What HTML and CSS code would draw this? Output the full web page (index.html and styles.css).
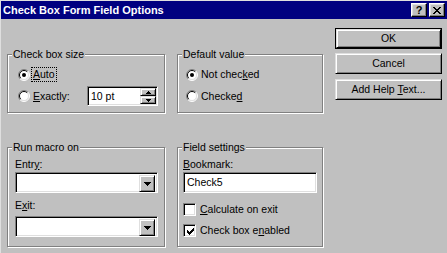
FILE: index.html
```html
<!DOCTYPE html>
<html>
<head>
<meta charset="utf-8">
<link rel="stylesheet" href="styles.css">
</head>
<body>
<div class="window">
  <div class="titlebar">
    <span class="title">Check Box Form Field Options</span>
    <div class="caption-btns">
      <div class="cap-btn help">?</div>
      <div class="cap-btn close">
        <svg width="8" height="7" viewBox="0 0 8 7" shape-rendering="crispEdges"><path d="M0 0h2v1h-2zM6 0h2v1h-2zM1 1h2v1h-2zM5 1h2v1h-2zM2 2h4v1h-4zM3 3h2v1h-2zM2 4h4v1h-4zM1 5h2v1h-2zM5 5h2v1h-2zM0 6h2v1h-2zM6 6h2v1h-2z" fill="#000"/></svg>
      </div>
    </div>
  </div>
  <div class="content">
    <div class="groups">
      <div class="group g-size">
        <span class="group-label">Check box size</span>
        <div class="opt-row">
          <svg class="radio" width="12" height="12" viewBox="0 0 12 12"><circle cx="6" cy="6" r="5" fill="#fff"/><path d="M2.1 9.9A5.5 5.5 0 0 1 9.9 2.1" fill="none" stroke="#808080"/><path d="M9.9 2.1A5.5 5.5 0 0 1 2.1 9.9" fill="none" stroke="#fff"/><path d="M2.8 9.2A4.5 4.5 0 0 1 9.2 2.8" fill="none" stroke="#000"/><path d="M9.2 2.8A4.5 4.5 0 0 1 2.8 9.2" fill="none" stroke="#dfdfdf"/><circle cx="6" cy="6" r="2" fill="#000"/></svg>
          <span class="lbl focus"><u>A</u>uto</span>
        </div>
        <div class="opt-row tall">
          <svg class="radio" width="12" height="12" viewBox="0 0 12 12"><circle cx="6" cy="6" r="5" fill="#fff"/><path d="M2.1 9.9A5.5 5.5 0 0 1 9.9 2.1" fill="none" stroke="#808080"/><path d="M9.9 2.1A5.5 5.5 0 0 1 2.1 9.9" fill="none" stroke="#fff"/><path d="M2.8 9.2A4.5 4.5 0 0 1 9.2 2.8" fill="none" stroke="#000"/><path d="M9.2 2.8A4.5 4.5 0 0 1 2.8 9.2" fill="none" stroke="#dfdfdf"/></svg>
          <span class="lbl exactly"><u>E</u>xactly:</span>
          <div class="sunken spin">
            <span class="field-text">10 pt</span>
            <div class="spin-btns">
              <div class="raised spin-btn"><svg width="5" height="3" viewBox="0 0 5 3" shape-rendering="crispEdges"><path d="M2 0h1v1h1v1h1v1h-5v-1h1v-1h1z" fill="#000"/></svg></div>
              <div class="raised spin-btn"><svg width="5" height="3" viewBox="0 0 5 3" shape-rendering="crispEdges"><path d="M0 0h5v1h-1v1h-1v1h-1v-1h-1v-1h-1z" fill="#000"/></svg></div>
            </div>
          </div>
        </div>
      </div>

      <div class="group g-default">
        <span class="group-label">Default value</span>
        <div class="opt-row">
          <svg class="radio" width="12" height="12" viewBox="0 0 12 12"><circle cx="6" cy="6" r="5" fill="#fff"/><path d="M2.1 9.9A5.5 5.5 0 0 1 9.9 2.1" fill="none" stroke="#808080"/><path d="M9.9 2.1A5.5 5.5 0 0 1 2.1 9.9" fill="none" stroke="#fff"/><path d="M2.8 9.2A4.5 4.5 0 0 1 9.2 2.8" fill="none" stroke="#000"/><path d="M9.2 2.8A4.5 4.5 0 0 1 2.8 9.2" fill="none" stroke="#dfdfdf"/><circle cx="6" cy="6" r="2" fill="#000"/></svg>
          <span class="lbl">Not chec<u>k</u>ed</span>
        </div>
        <div class="opt-row tall">
          <svg class="radio" width="12" height="12" viewBox="0 0 12 12"><circle cx="6" cy="6" r="5" fill="#fff"/><path d="M2.1 9.9A5.5 5.5 0 0 1 9.9 2.1" fill="none" stroke="#808080"/><path d="M9.9 2.1A5.5 5.5 0 0 1 2.1 9.9" fill="none" stroke="#fff"/><path d="M2.8 9.2A4.5 4.5 0 0 1 9.2 2.8" fill="none" stroke="#000"/><path d="M9.2 2.8A4.5 4.5 0 0 1 2.8 9.2" fill="none" stroke="#dfdfdf"/></svg>
          <span class="lbl">Checke<u>d</u></span>
        </div>
      </div>

      <div class="group g-macro">
        <span class="group-label">Run macro on</span>
        <div class="field-label">Entr<u>y</u>:</div>
        <div class="sunken combo">
          <div class="raised drop-btn"><svg width="7" height="4" viewBox="0 0 7 4" shape-rendering="crispEdges"><path d="M0 0h7v1h-1v1h-1v1h-1v1h-1v-1h-1v-1h-1v-1h-1z" fill="#000"/></svg></div>
        </div>
        <div class="field-label second">E<u>x</u>it:</div>
        <div class="sunken combo">
          <div class="raised drop-btn"><svg width="7" height="4" viewBox="0 0 7 4" shape-rendering="crispEdges"><path d="M0 0h7v1h-1v1h-1v1h-1v1h-1v-1h-1v-1h-1v-1h-1z" fill="#000"/></svg></div>
        </div>
      </div>

      <div class="group g-field">
        <span class="group-label">Field settings</span>
        <div class="field-label"><u>B</u>ookmark:</div>
        <div class="sunken textbox"><span class="field-text">Check5</span></div>
        <div class="chk-row first">
          <div class="sunken checkbox"></div>
          <span class="lbl"><u>C</u>alculate on exit</span>
        </div>
        <div class="chk-row">
          <div class="sunken checkbox"><svg width="7" height="7" viewBox="0 0 7 7" shape-rendering="crispEdges"><path d="M6 0h1v3h-1v1h-1v1h-1v1h-1v1h-1v-1h-1v-1h-1v-3h1v1h1v1h1v-1h1v-1h1z" fill="#000"/></svg></div>
          <span class="lbl">Check box e<u>n</u>abled</span>
        </div>
      </div>
    </div>

    <div class="buttons">
      <div class="btn default"><div class="raised btn-face"><span>OK</span></div></div>
      <div class="btn raised"><span>Cancel</span></div>
      <div class="btn raised"><span>Add Help <u>T</u>ext...</span></div>
    </div>
  </div>
</div>
</body>
</html>
```
FILE: styles.css
```css
* { box-sizing: border-box; }

html, body {
  margin: 0;
  background: #c0c0c0;
}

body {
  width: 447px;
  height: 253px;
  overflow: hidden;
  font-family: "Liberation Sans", Arial, sans-serif;
  font-size: 10.5px;
  line-height: 13px;
  color: #000;
}

u { text-decoration: underline; text-underline-offset: 1px; }

.window {
  height: 253px;
  border-top: 1px solid #dfdfdf;
  border-left: 1px solid #dfdfdf;
}

.titlebar {
  height: 18px;
  background: #000080;
  color: #fff;
  display: flex;
  align-items: center;
  padding-left: 2px;
}

.title {
  font-weight: bold;
  font-size: 11px;
}

.caption-btns {
  margin-left: auto;
  margin-right: 2px;
  display: flex;
  gap: 2px;
}

.cap-btn {
  width: 16px;
  height: 14px;
  background: #c0c0c0;
  color: #000;
  border: 1px solid;
  border-color: #fff #000 #000 #fff;
  box-shadow: inset -1px -1px #808080, inset 1px 1px #dfdfdf;
  display: flex;
  align-items: center;
  justify-content: center;
}

.cap-btn.help {
  font-weight: bold;
  font-size: 11px;
  line-height: 12px;
}

.content {
  display: flex;
  align-items: flex-start;
  padding-left: 6px;
}

.groups {
  margin-top: 35px;
  display: grid;
  grid-template-columns: 158px 146px;
  grid-template-rows: 59px 100px;
  column-gap: 12px;
  row-gap: 34px;
}

.group {
  position: relative;
  border: 1px solid #808080;
  box-shadow: inset 1px 1px #fff, 1px 1px #fff;
}

.group-label {
  position: absolute;
  top: -7px;
  left: 4px;
  padding: 0 1px;
  background: #c0c0c0;
  line-height: 13px;
}

.g-size { padding: 12px 0 0 10px; }
.g-default { padding: 12px 0 0 8px; }
.g-macro { padding: 10px 0 0 7px; }
.g-field { padding: 10px 0 0 5px; }

.opt-row {
  display: flex;
  align-items: center;
  height: 15px;
}

.opt-row.tall {
  height: 20px;
  margin-top: 4px;
}

.radio { margin-right: 1px; flex: none; }

.lbl {
  border: 1px dotted transparent;
  padding: 0 1px;
  line-height: 13px;
  white-space: nowrap;
}

.lbl.focus { border-color: #000; }

.lbl.exactly { flex: 0 0 56px; }

.sunken {
  background: #fff;
  border: 1px solid;
  border-color: #808080 #fff #fff #808080;
  box-shadow: inset 1px 1px #000, inset -1px -1px #dfdfdf;
}

.raised {
  background: #c0c0c0;
  border: 1px solid;
  border-color: #dfdfdf #000 #000 #dfdfdf;
  box-shadow: inset 1px 1px #fff, inset -1px -1px #808080;
}

.spin {
  width: 71px;
  height: 20px;
  display: flex;
  align-items: center;
  padding: 2px 1px 2px 2px;
}

.field-text { padding-left: 1px; }

.spin-btns {
  margin-left: auto;
  display: flex;
  flex-direction: column;
  width: 16px;
  height: 16px;
}

.spin-btn {
  height: 8px;
  display: flex;
  align-items: center;
  justify-content: center;
}

.field-label { height: 13px; }
.field-label.second { margin-top: 6px; }

.combo {
  margin-top: 1px;
  width: 143px;
  height: 21px;
  display: flex;
  justify-content: flex-end;
  padding: 2px;
}

.drop-btn {
  width: 16px;
  height: 17px;
  display: flex;
  align-items: center;
  justify-content: center;
}

.field-label.second + .combo { margin-top: 4px; }

.textbox {
  margin-top: 1px;
  width: 134px;
  height: 21px;
  display: flex;
  align-items: center;
  padding-left: 2px;
}

.chk-row {
  display: flex;
  align-items: center;
  height: 15px;
  margin-top: 6px;
}

.chk-row.first { margin-top: 9px; }

.checkbox {
  width: 13px;
  height: 13px;
  margin-right: 2px;
  flex: none;
  display: flex;
  align-items: center;
  justify-content: center;
  padding-left: 1px;
  padding-top: 1px;
}

.buttons {
  margin-top: 9px;
  margin-left: 12px;
  display: flex;
  flex-direction: column;
  gap: 4px;
}

.btn {
  width: 107px;
  height: 21px;
  display: flex;
  align-items: center;
  justify-content: center;
  white-space: nowrap;
}

.btn:last-child { margin-top: 1px; }

.btn.default {
  border: 1px solid #000;
}

.btn-face {
  width: 100%;
  height: 100%;
  display: flex;
  align-items: center;
  justify-content: center;
}
```
